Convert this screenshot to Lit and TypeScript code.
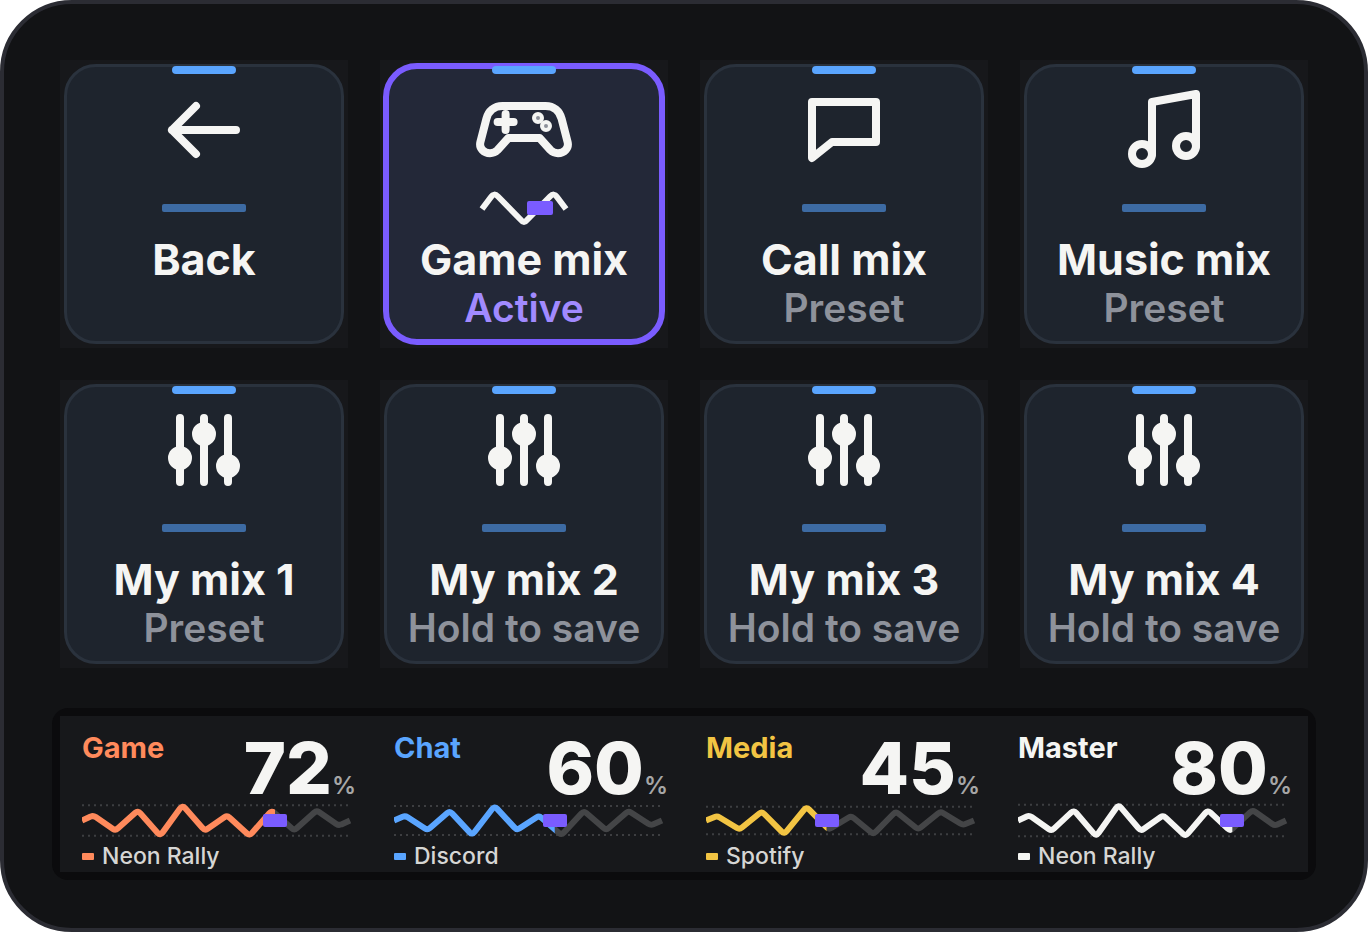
import { LitElement, html, svg, css, nothing } from "lit";
import { customElement, property, state } from "lit/decorators.js";
import { classMap } from "lit/directives/class-map.js";
import { styleMap } from "lit/directives/style-map.js";

type IconName = "back" | "gamepad" | "chat" | "music" | "sliders";

interface Tile {
  icon: IconName;
  title: string;
  status?: string;
}

interface Channel {
  name: string;
  source: string;
  level: number;
  color: string;
}

const ICONS = {
  back: svg`<path d="M20 12H4M10 6L4 12L10 18" />`,
  gamepad: svg`
    <path d="M6.6 6H17.4C19.4 6 20.9 7.2 21.4 9.2L22.9 15C23.3 16.6 22 17.8 20.5 17.8C19.7 17.8 19.1 17.5 18.6 17L15.9 14H8.1L5.4 17C4.9 17.5 4.3 17.8 3.5 17.8C2 17.8 0.7 16.6 1.1 15L2.6 9.2C3.1 7.2 4.6 6 6.6 6Z" />
    <path d="M7.4 8V12M5.4 10H9.4" />
    <circle class="dot" cx="15.5" cy="9" r="1" />
    <circle class="dot" cx="17.5" cy="11" r="1" />`,
  chat: svg`<path d="M4 5H20V15H9L4 19Z" />`,
  music: svg`
    <path d="M9 18V5L20 3V16" />
    <circle cx="6.5" cy="18" r="2.5" />
    <circle cx="17.5" cy="16" r="2.5" />`,
  sliders: svg`
    <path d="M6 4V20M12 4V20M18 4V20" />
    <circle class="solid" cx="6" cy="14" r="2" />
    <circle class="solid" cx="12" cy="8" r="2" />
    <circle class="solid" cx="18" cy="16" r="2" />`,
};

const TILES: Tile[] = [
  { icon: "back", title: "Back" },
  { icon: "gamepad", title: "Game mix", status: "Preset" },
  { icon: "chat", title: "Call mix", status: "Preset" },
  { icon: "music", title: "Music mix", status: "Preset" },
  { icon: "sliders", title: "My mix 1", status: "Preset" },
  { icon: "sliders", title: "My mix 2", status: "Hold to save" },
  { icon: "sliders", title: "My mix 3", status: "Hold to save" },
  { icon: "sliders", title: "My mix 4", status: "Hold to save" },
];

const CHANNELS: Channel[] = [
  { name: "Game", source: "Neon Rally", level: 72, color: "#ff8a5c" },
  { name: "Chat", source: "Discord", level: 60, color: "#5aa5ff" },
  { name: "Media", source: "Spotify", level: 45, color: "#f2c443" },
  { name: "Master", source: "Neon Rally", level: 80, color: "#f5f5f3" },
];

@customElement("mix-tile")
class MixTile extends LitElement {
  @property() icon: IconName = "sliders";
  @property() label = "";
  @property() status = "";
  @property({ type: Boolean }) active = false;

  static styles = css`
    :host {
      display: grid;
    }
    .tile {
      position: relative;
      display: grid;
      padding: 4px;
      border: 0;
      background: #17181b;
      color: #f5f5f3;
      font: inherit;
      cursor: pointer;
    }
    .card {
      display: flex;
      flex-direction: column;
      align-items: center;
      padding: 15px 0 8px;
      border: 3px solid #2a323d;
      border-radius: 32px;
      background: #1e242d;
    }
    .active .card {
      margin: -1px;
      padding: 13px 0 6px;
      border: 6px solid #7a5cff;
      border-radius: 34px;
      background: #232838;
    }
    .tab {
      position: absolute;
      top: 6px;
      left: 50%;
      width: 64px;
      height: 8px;
      margin-left: -32px;
      border-radius: 4px;
      background: #5aa5ff;
    }
    .icon {
      width: 96px;
      height: 96px;
      fill: none;
      stroke: currentColor;
      stroke-width: 2;
      stroke-linecap: round;
      stroke-linejoin: round;
    }
    .icon .solid {
      fill: currentColor;
    }
    .icon .dot {
      fill: #8d909a;
      stroke-width: 1;
    }
    .meter {
      display: grid;
      place-items: center;
      height: 32px;
      margin: 14px 0 11px;
    }
    .flat {
      width: 84px;
      height: 8px;
      border-radius: 2px;
      background: #3d6ba3;
    }
    .wave {
      width: 88px;
      height: 32px;
      overflow: visible;
      fill: none;
      stroke: currentColor;
      stroke-width: 6;
      stroke-linejoin: round;
    }
    .wave rect {
      fill: #7a5cff;
      stroke: none;
    }
    .title {
      font-size: 43px;
      line-height: 48px;
      font-weight: 700;
      white-space: nowrap;
    }
    .status {
      font-size: 39px;
      line-height: 50px;
      font-weight: 600;
      color: #8e929b;
      white-space: nowrap;
    }
    .active .status {
      color: #a18aff;
    }
  `;

  render() {
    return html`
      <button
        type="button"
        class=${classMap({ tile: true, active: this.active })}
        aria-pressed=${this.active ? "true" : "false"}
      >
        <span class="card">
          <svg class="icon" viewBox="0 0 24 24" aria-hidden="true">${ICONS[this.icon]}</svg>
          <span class="meter">
            ${this.active
              ? html`<svg class="wave" viewBox="0 0 88 32" aria-hidden="true">
                  <path d="M2 17L11 5Q14 0.500 18 4.500L41 28Q44 32 47 28L70 4.500Q74 0.500 77 5L86 17" />
                  <rect x="47" y="9" width="26" height="14" rx="2" />
                </svg>`
              : html`<span class="flat"></span>`}
          </span>
          <span class="title">${this.label}</span>
          ${this.status ? html`<span class="status">${this.status}</span>` : nothing}
        </span>
        <span class="tab"></span>
      </button>
    `;
  }
}

const WAVE_WIDTH = 268;
const WAVE_MIDDLE = 16.5;
const WAVE_SHAPE = [0.33, -0.66, 0.66, -1, 1, -0.66, 0.33, -1, 0.66, -0.66, 0.66, -0.33];

// Zigzag through the shape's peaks, each corner softened by a short curve.
function wavePath(amplitude: number): string {
  const step = WAVE_WIDTH / WAVE_SHAPE.length;
  const pts = [
    [0, WAVE_MIDDLE],
    ...WAVE_SHAPE.map((v, i) => [step * (i + 0.5), WAVE_MIDDLE - v * amplitude]),
    [WAVE_WIDTH, WAVE_MIDDLE],
  ];
  const toward = (a: number[], b: number[]) => {
    const t = 2.5 / Math.abs(b[0] - a[0]);
    return `${(a[0] + (b[0] - a[0]) * t).toFixed(1)} ${(a[1] + (b[1] - a[1]) * t).toFixed(1)}`;
  };
  let d = `M${pts[0].join(" ")}`;
  for (let i = 1; i < pts.length - 1; i++) {
    const p = pts[i];
    d += `L${toward(p, pts[i - 1])}Q${p[0].toFixed(1)} ${p[1].toFixed(1)} ${toward(p, pts[i + 1])}`;
  }
  return d + `L${pts[pts.length - 1].join(" ")}`;
}

@customElement("mix-channel")
class MixChannel extends LitElement {
  @property() name = "";
  @property() source = "";
  @property() color = "";
  @property({ type: Number }) level = 0;

  static styles = css`
    :host {
      display: block;
      min-width: 0;
      padding: 16px 16px 2px 22px;
      background: #17181b;
    }
    .head {
      display: flex;
      justify-content: space-between;
      align-items: flex-start;
    }
    .name {
      font-size: 29px;
      line-height: 32px;
      font-weight: 700;
      color: var(--tone);
    }
    .value {
      font-size: 72px;
      line-height: 72px;
      font-weight: 800;
      color: #f5f5f3;
    }
    .unit {
      font-size: 24px;
      line-height: 24px;
      font-weight: 600;
      color: #a6a6a6;
    }
    .track {
      display: grid;
      height: 33px;
      margin-right: 6px;
    }
    .track > * {
      grid-area: 1 / 1;
    }
    .wave {
      width: 100%;
      height: 33px;
      overflow: visible;
      fill: none;
      stroke-width: 6;
      stroke-linejoin: round;
    }
    .guide {
      stroke: #3d3e41;
      stroke-width: 2;
      stroke-dasharray: 2 4;
    }
    .rest {
      stroke: #444547;
    }
    .played {
      stroke: var(--tone);
    }
    .slider {
      appearance: none;
      width: calc(100% + 24px);
      height: 33px;
      margin: 0 -12px;
      background: none;
      cursor: pointer;
    }
    .slider::-webkit-slider-thumb {
      appearance: none;
      width: 24px;
      height: 13px;
      border-radius: 2px;
      background: #7a5cff;
    }
    .source {
      display: flex;
      align-items: center;
      gap: 8px;
      margin-top: 5px;
      font-size: 23px;
      line-height: 28px;
      font-weight: 500;
      color: #d6d6d4;
      white-space: nowrap;
    }
    .chip {
      width: 12px;
      height: 7px;
      border-radius: 1px;
      background: var(--tone);
    }
  `;

  private onInput(e: Event) {
    this.level = Number((e.target as HTMLInputElement).value);
  }

  render() {
    const amplitude = 11 + this.level * 0.06;
    const d = wavePath(amplitude);
    const split = (WAVE_WIDTH * this.level) / 100;
    return html`
      <div style=${styleMap({ "--tone": this.color })}>
        <div class="head">
          <label class="name" for="level">${this.name}</label>
          <span class="value">${this.level}<span class="unit">%</span></span>
        </div>
        <div class="track">
          <svg class="wave" viewBox="0 0 268 33" preserveAspectRatio="none" aria-hidden="true">
            <defs>
              <clipPath id="played"><rect x="0" y="-10" width=${split} height="53" /></clipPath>
              <clipPath id="rest"><rect x=${split} y="-10" width="280" height="53" /></clipPath>
            </defs>
            <path class="guide" d="M0 ${WAVE_MIDDLE - amplitude}H266M0 ${WAVE_MIDDLE + amplitude}H266" />
            <path class="rest" clip-path="url(#rest)" d=${d} />
            <path class="played" clip-path="url(#played)" d=${d} />
          </svg>
          <input
            class="slider"
            id="level"
            type="range"
            min="0"
            max="100"
            .value=${String(this.level)}
            @input=${this.onInput}
          />
        </div>
        <div class="source"><span class="chip"></span>${this.source}</div>
      </div>
    `;
  }
}

@customElement("app-root")
class AppRoot extends LitElement {
  @state() private selected = 1;

  static styles = css`
    :host {
      display: block;
      background: #ffffff;
      font-family: Inter, "Liberation Sans", sans-serif;
    }
    .device {
      box-sizing: border-box;
      display: flex;
      flex-direction: column;
      gap: 40px;
      min-height: 100vh;
      padding: 56px 56px 48px;
      border: 4px solid #2b2c33;
      border-radius: 72px;
      background: #121315;
    }
    .tiles {
      display: grid;
      grid-template-columns: repeat(4, minmax(0, 1fr));
      gap: 32px;
    }
    .strip {
      display: grid;
      grid-template-columns: repeat(4, minmax(0, 1fr));
      margin: 0 -8px;
      padding: 8px;
      border-radius: 16px;
      background: #0b0b0d;
    }
  `;

  private select(index: number) {
    if (TILES[index].icon !== "back") this.selected = index;
  }

  render() {
    return html`
      <main class="device">
        <section class="tiles" aria-label="Mixes">
          ${TILES.map(
            (t, i) => html`<mix-tile
              .icon=${t.icon}
              .label=${t.title}
              .status=${i === this.selected ? "Active" : t.status ?? ""}
              .active=${i === this.selected}
              @click=${() => this.select(i)}
            ></mix-tile>`
          )}
        </section>
        <section class="strip" aria-label="Channels">
          ${CHANNELS.map(
            (c) => html`<mix-channel
              .name=${c.name}
              .source=${c.source}
              .color=${c.color}
              .level=${c.level}
            ></mix-channel>`
          )}
        </section>
      </main>
    `;
  }
}
